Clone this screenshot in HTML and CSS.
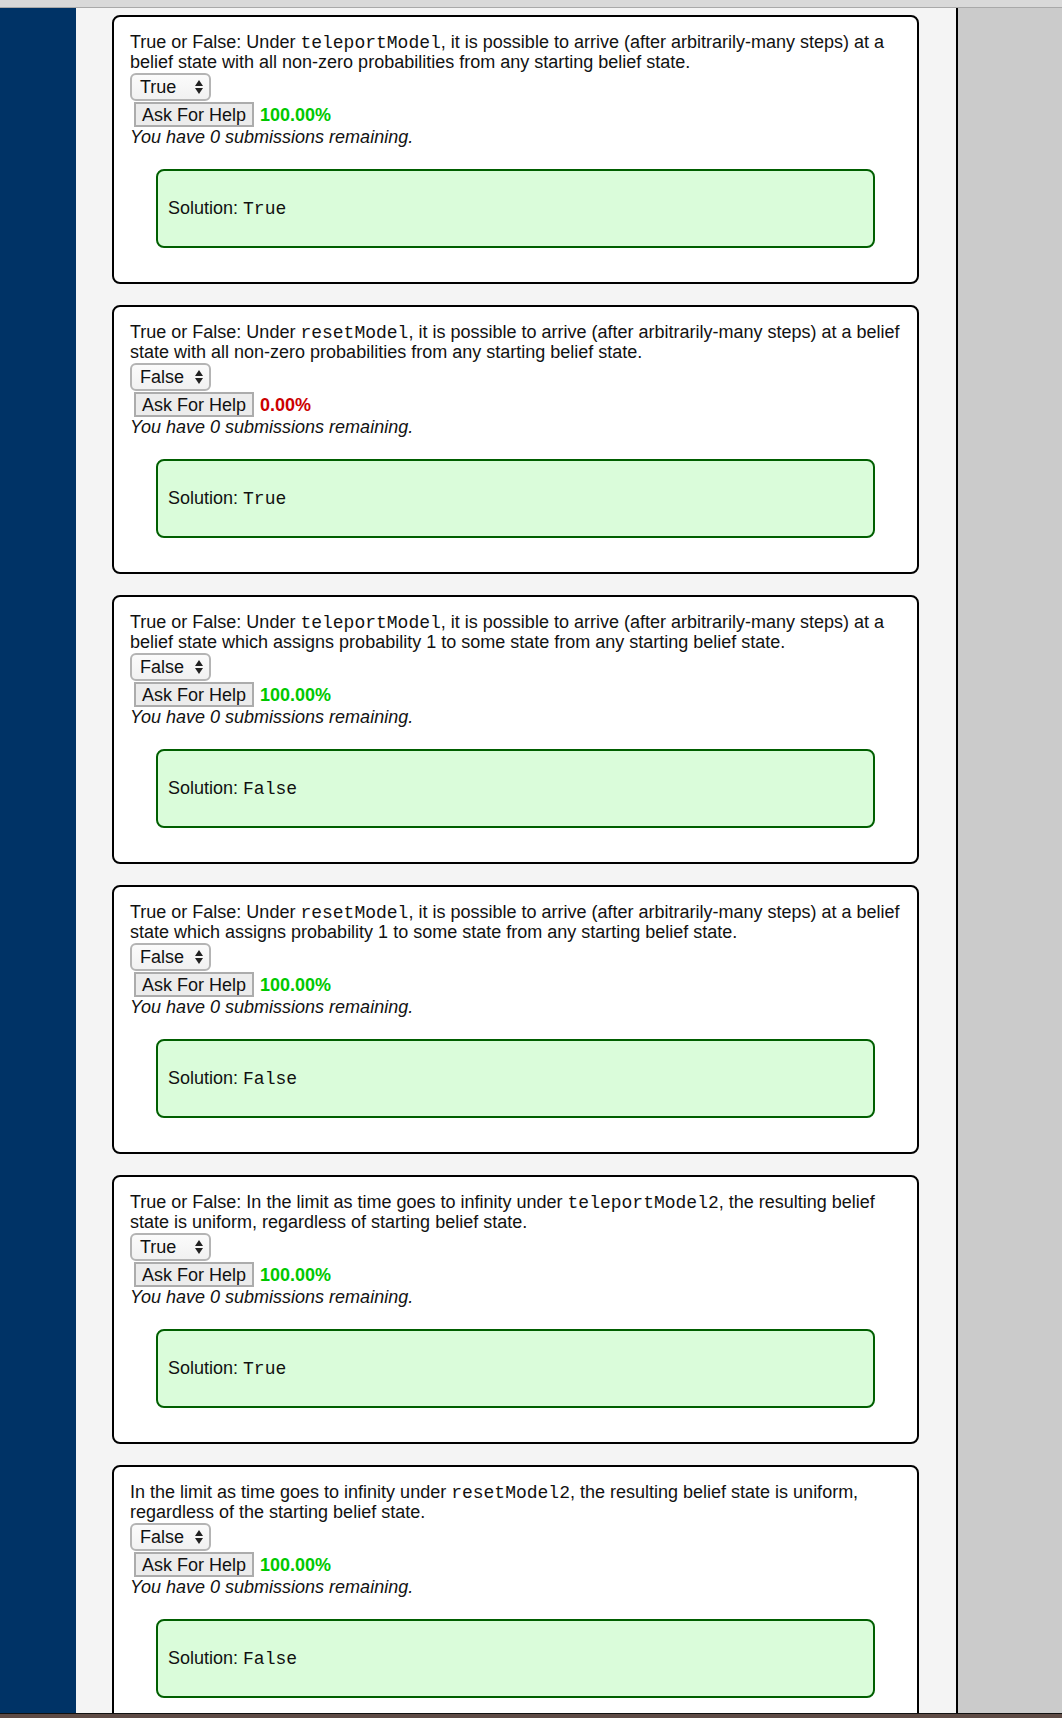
FILE: index.html
```html
<!DOCTYPE html>
<html>
<head>
<meta charset="utf-8">
<link rel="stylesheet" href="styles.css">
</head>
<body>
<div class="topbar"></div>
<div class="window">
  <div class="nav"></div>
  <div class="main">
    <div class="card">
      <div class="question">True or False: Under <code>teleportModel</code>, it is possible to arrive (after arbitrarily-many steps) at a belief state with all non-zero probabilities from any starting belief state.</div>
      <div class="select"><span>True</span><svg class="arrows" width="8" height="14" viewBox="0 0 8 14"><path d="M4 0 L8 6 L0 6 Z M4 14 L8 8 L0 8 Z" fill="#222"/></svg></div>
      <div class="help-row"><span class="btn">Ask For Help</span><span class="score good">100.00%</span></div>
      <div class="remaining">You have 0 submissions remaining.</div>
      <div class="solution">Solution: <code>True</code></div>
    </div>
    <div class="card">
      <div class="question">True or False: Under <code>resetModel</code>, it is possible to arrive (after arbitrarily-many steps) at a belief state with all non-zero probabilities from any starting belief state.</div>
      <div class="select"><span>False</span><svg class="arrows" width="8" height="14" viewBox="0 0 8 14"><path d="M4 0 L8 6 L0 6 Z M4 14 L8 8 L0 8 Z" fill="#222"/></svg></div>
      <div class="help-row"><span class="btn">Ask For Help</span><span class="score bad">0.00%</span></div>
      <div class="remaining">You have 0 submissions remaining.</div>
      <div class="solution">Solution: <code>True</code></div>
    </div>
    <div class="card">
      <div class="question">True or False: Under <code>teleportModel</code>, it is possible to arrive (after arbitrarily-many steps) at a belief state which assigns probability 1 to some state from any starting belief state.</div>
      <div class="select"><span>False</span><svg class="arrows" width="8" height="14" viewBox="0 0 8 14"><path d="M4 0 L8 6 L0 6 Z M4 14 L8 8 L0 8 Z" fill="#222"/></svg></div>
      <div class="help-row"><span class="btn">Ask For Help</span><span class="score good">100.00%</span></div>
      <div class="remaining">You have 0 submissions remaining.</div>
      <div class="solution">Solution: <code>False</code></div>
    </div>
    <div class="card">
      <div class="question">True or False: Under <code>resetModel</code>, it is possible to arrive (after arbitrarily-many steps) at a belief state which assigns probability 1 to some state from any starting belief state.</div>
      <div class="select"><span>False</span><svg class="arrows" width="8" height="14" viewBox="0 0 8 14"><path d="M4 0 L8 6 L0 6 Z M4 14 L8 8 L0 8 Z" fill="#222"/></svg></div>
      <div class="help-row"><span class="btn">Ask For Help</span><span class="score good">100.00%</span></div>
      <div class="remaining">You have 0 submissions remaining.</div>
      <div class="solution">Solution: <code>False</code></div>
    </div>
    <div class="card">
      <div class="question">True or False: In the limit as time goes to infinity under <code>teleportModel2</code>, the resulting belief state is uniform, regardless of starting belief state.</div>
      <div class="select"><span>True</span><svg class="arrows" width="8" height="14" viewBox="0 0 8 14"><path d="M4 0 L8 6 L0 6 Z M4 14 L8 8 L0 8 Z" fill="#222"/></svg></div>
      <div class="help-row"><span class="btn">Ask For Help</span><span class="score good">100.00%</span></div>
      <div class="remaining">You have 0 submissions remaining.</div>
      <div class="solution">Solution: <code>True</code></div>
    </div>
    <div class="card">
      <div class="question">In the limit as time goes to infinity under <code>resetModel2</code>, the resulting belief state is uniform, regardless of the starting belief state.</div>
      <div class="select"><span>False</span><svg class="arrows" width="8" height="14" viewBox="0 0 8 14"><path d="M4 0 L8 6 L0 6 Z M4 14 L8 8 L0 8 Z" fill="#222"/></svg></div>
      <div class="help-row"><span class="btn">Ask For Help</span><span class="score good">100.00%</span></div>
      <div class="remaining">You have 0 submissions remaining.</div>
      <div class="solution">Solution: <code>False</code></div>
    </div>
  </div>
  <div class="side"></div>
</div>
<div class="bottombar"></div>
</body>
</html>
```
FILE: styles.css
```css
html, body {
  margin: 0;
  padding: 0;
  background: #cbcbcb;
}
body {
  width: 1062px;
  height: 1718px;
  overflow: hidden;
  font-family: "Liberation Sans", Arial, sans-serif;
  font-size: 18px;
  line-height: 20px;
  color: #111;
}
.topbar {
  height: 7px;
  background: #d9d9d9;
  border-bottom: 1px solid #a9a9a9;
}
.window {
  display: flex;
  height: 1705px;
  overflow: hidden;
}
.nav {
  width: 76px;
  flex: none;
  background: #003366;
}
.main {
  width: 880px;
  flex: none;
  background: #f4f4f4;
  border-right: 2px solid #000;
  padding-top: 7px;
}
.side {
  flex: 1;
  background: #cbcbcb;
}
.bottombar {
  height: 4px;
  border-top: 1px solid #111;
  background: #5e4b45;
}
.card {
  margin: 0 37px 21px 36px;
  background: #fff;
  border: 2px solid #000;
  border-radius: 8px;
  padding: 15px 12px 34px 16px;
}
.question {
  height: 40px;
}
code {
  font-family: "Liberation Mono", "Courier New", monospace;
  font-size: 18px;
  line-height: 10px;
}
.select {
  display: flex;
  align-items: center;
  justify-content: space-between;
  box-sizing: border-box;
  width: 81px;
  height: 28px;
  margin-top: 1px;
  padding: 0 6px 0 8px;
  border: 2px solid #b4b4b4;
  border-radius: 6px;
  background: linear-gradient(#fbfbfb, #f1f1f1);
}
.help-row {
  display: flex;
  align-items: center;
  margin-top: 1px;
  margin-left: 4px;
  gap: 6px;
  height: 25px;
}
.btn {
  box-sizing: border-box;
  height: 25px;
  padding: 1px 6px 0 6px;
  line-height: 20px;
  background: #ececec;
  border: 2px solid #acacac;
}
.score {
  font-weight: bold;
}
.good { color: #00c800; }
.bad { color: #cc0000; }
.remaining {
  font-style: italic;
  height: 20px;
}
.solution {
  margin: 22px 30px 0 26px;
  padding: 28px 10px;
  line-height: 19px;
  background: #dafcda;
  border: 2px solid #005f00;
  border-radius: 8px;
}
```
